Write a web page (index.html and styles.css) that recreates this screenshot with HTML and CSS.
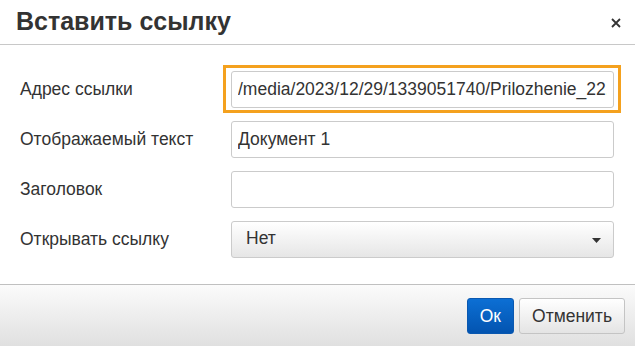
FILE: index.html
```html
<!DOCTYPE html>
<html lang="ru">
<head>
<meta charset="UTF-8">
<meta name="viewport" content="width=device-width, initial-scale=1.0">
<title>Вставить ссылку</title>
<link rel="stylesheet" href="styles.css">
</head>
<body>

<div class="dialog">
    <div class="dialog-head">
        <h1>Вставить ссылку</h1>
        <span class="close" title="Закрыть">
            <svg width="10" height="10" viewBox="0 0 10 10"><path d="M1 1L9 9M9 1L1 9" stroke="#333" stroke-width="1.8"/></svg>
        </span>
    </div>
    <div class="dialog-body">
        <label class="field-label" for="href">Адрес ссылки</label>
        <div class="focus-ring">
            <input class="field" id="href" type="text" value="/media/2023/12/29/1339051740/Prilozhenie_22.pdf">
        </div>

        <label class="field-label" for="text">Отображаемый текст</label>
        <input class="field" id="text" type="text" value="Документ 1">

        <label class="field-label" for="caption">Заголовок</label>
        <input class="field" id="caption" type="text" value="">

        <span class="field-label">Открывать ссылку</span>
        <div class="select">
            <span>Нет</span>
            <svg class="caret" width="9" height="5" viewBox="0 0 9 5"><path d="M0 0H9L4.5 5Z" fill="#333"/></svg>
        </div>
    </div>
    <div class="dialog-foot">
        <button class="btn btn-primary">Ок</button>
        <button class="btn">Отменить</button>
    </div>
</div>

</body>
</html>
```
FILE: styles.css
```css
body {
    font-family: "Liberation Sans", Arial, sans-serif;
    margin: 0;
    padding: 0;
    background-color: #fff;
    color: #333;
}
.dialog {
    width: 635px;
    height: 346px;
    display: flex;
    flex-direction: column;
    background-color: #fff;
}
.dialog-head {
    height: 44px;
    display: flex;
    align-items: center;
    justify-content: space-between;
    padding: 0 14px 0 16px;
    border-bottom: 1px solid #c8c8c8;
}
.dialog-head h1 {
    margin: 0 0 2px 0;
    font-size: 25px;
    font-weight: bold;
    color: #333;
}
.close {
    display: flex;
    margin-top: 1px;
    cursor: pointer;
}
.dialog-body {
    flex: 1;
    display: grid;
    grid-template-columns: 211px 383px;
    grid-auto-rows: 37px;
    row-gap: 13px;
    align-items: center;
    padding: 26px 0 0 20px;
}
.field-label {
    font-size: 17.5px;
    color: #333;
}
.field {
    box-sizing: border-box;
    width: 100%;
    height: 37px;
    margin: 0;
    padding: 0 6px;
    font-family: inherit;
    font-size: 17.5px;
    color: #333;
    border: 1px solid #cbcbcb;
    border-radius: 3px;
    background-color: #fff;
    outline: none;
}
.focus-ring {
    margin: -6px -7px -5px -8px;
    padding: 3px 4px 2px 5px;
    border: 3px solid #f4a11e;
}
.focus-ring .field {
    display: block;
}
.select {
    box-sizing: border-box;
    height: 37px;
    display: flex;
    align-items: center;
    justify-content: space-between;
    padding: 0 12px 2px 14px;
    font-size: 17.5px;
    border: 1px solid #cbcbcb;
    border-radius: 3px;
    background: linear-gradient(#fff, #e6e6e6);
}
.caret {
    margin-top: 3px;
}
.dialog-foot {
    height: 62px;
    box-sizing: border-box;
    display: flex;
    justify-content: flex-end;
    gap: 5px;
    padding: 13px 10px 0 0;
    border-top: 1px solid #c0c0c0;
    background: linear-gradient(#fbfbfb, #e0e0e0);
}
.btn {
    height: 36px;
    padding: 0 12px;
    font-family: inherit;
    font-size: 17.5px;
    color: #333;
    border: 1px solid #c4c4c4;
    border-radius: 3px;
    background: linear-gradient(#fff, #e4e4e4);
    cursor: pointer;
}
.btn-primary {
    color: #fff;
    border-color: #0a58b0;
    background: linear-gradient(#0c6fd4, #0354b0);
}
```
